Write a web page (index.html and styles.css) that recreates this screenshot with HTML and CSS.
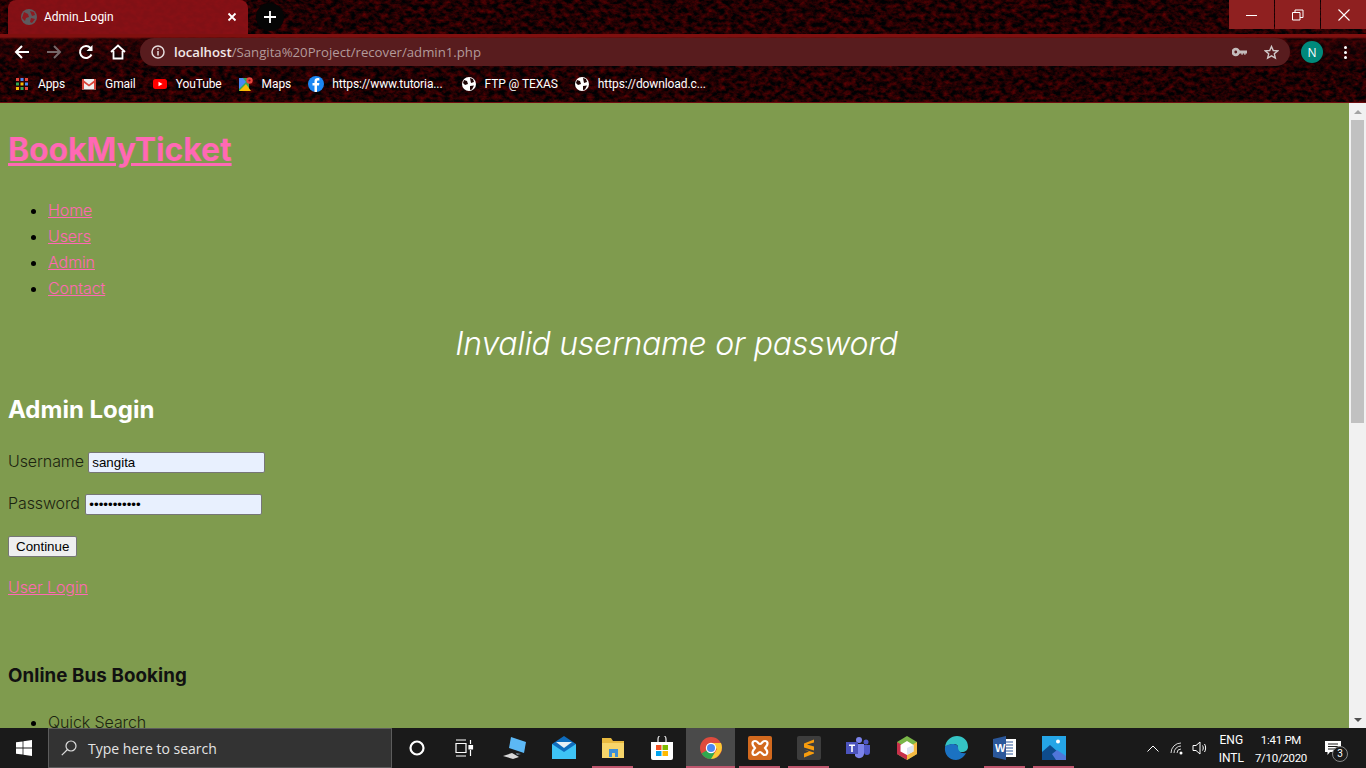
FILE: index.html
```html
<!DOCTYPE html>
<html lang="en">

<head>
    <meta charset="UTF-8">
    <title>Admin_Login</title>
    <link rel="stylesheet" href="styles.css">
</head>

<body>
    <div class="chrome">
        <svg class="texture" width="100%" height="100%" aria-hidden="true">
            <filter id="grain" x="0" y="0" width="100%" height="100%" color-interpolation-filters="sRGB">
                <feTurbulence type="fractalNoise" baseFrequency="0.16 0.22" numOctaves="4" seed="7" />
                <feColorMatrix type="matrix" values="0.65 0 0 0 -0.2  0 0 0 0 0.005  0 0 0 0 0.01  0 0 0 0 1" />
            </filter>
            <rect width="100%" height="100%" filter="url(#grain)" />
        </svg>

        <div class="tabstrip">
            <div class="tab">
                <svg class="favicon" viewBox="0 0 16 16"><circle cx="8" cy="8" r="8" fill="#5e5a5e"/><path d="M3 3l4 2 1 3-3 1-1 3-3-3zM9 2l4 1 1 3-3 1zM10 9l4 1-3 4-2-1z" fill="#8e1a20"/></svg>
                <span class="tab-title">Admin_Login</span>
                <svg class="tab-close" viewBox="0 0 10 10"><path d="M1.500 1.500l7 7M8.500 1.500l-7 7" stroke="#fff" stroke-width="1.800"/></svg>
            </div>
            <div class="new-tab"><svg viewBox="0 0 14 14" width="14" height="14"><path d="M7 1v12M1 7h12" stroke="#fff" stroke-width="1.800"/></svg></div>
            <div class="win-controls">
                <div class="win-btn"><svg viewBox="0 0 12 12" width="12" height="12"><path d="M0 6.500h11" stroke="#fff"/></svg></div>
                <div class="win-btn"><svg viewBox="0 0 12 12" width="12" height="12" fill="none" stroke="#fff"><path d="M.5 3.500h7.500v7.500H.5zM3 3.500V1h8v7.500H8"/></svg></div>
                <div class="win-btn"><svg viewBox="0 0 12 12" width="12" height="12"><path d="M.5.500l11 11M11.500.500l-11 11" stroke="#fff" stroke-width="1.100"/></svg></div>
            </div>
        </div>

        <div class="toolbar">
            <svg class="nav-icon" viewBox="0 0 16 16"><path d="M15 8H2M8 2L2 8l6 6" fill="none" stroke="#fff" stroke-width="2"/></svg>
            <svg class="nav-icon" viewBox="0 0 16 16"><path d="M1 8h13M8 2l6 6-6 6" fill="none" stroke="#77686a" stroke-width="2"/></svg>
            <svg class="nav-icon" viewBox="0 0 16 16"><path d="M13.500 10.500A6 6 0 1 1 12.500 4" fill="none" stroke="#fff" stroke-width="2"/><path d="M14.500 1v6h-6z" fill="#fff"/></svg>
            <svg class="nav-icon" viewBox="0 0 16 16"><path d="M1 8l7-6.500L15 8M3.500 7v7.500h9V7" fill="none" stroke="#fff" stroke-width="1.800"/></svg>
            <div class="omnibox">
                <svg class="info-icon" viewBox="0 0 14 14"><circle cx="7" cy="7" r="6" fill="none" stroke="#e6dcdc" stroke-width="1.500"/><path d="M7 6v4.500M7 3.300v1.500" stroke="#e6dcdc" stroke-width="1.500"/></svg>
                <span class="url"><b>localhost</b>/Sangita%20Project/recover/admin1.php</span>
                <svg class="omni-key" viewBox="0 0 16 10"><circle cx="4" cy="5" r="3" fill="none" stroke="#c4bcbc" stroke-width="3"/><path d="M7 3.500h9v3h-1.500V8H13V6.500h-1.500V8H10V6.500H7z" fill="#c4bcbc"/></svg>
                <svg class="omni-star" viewBox="0 0 16 16"><path d="M8 1.600l1.900 4.300 4.700.4-3.600 3.100 1.100 4.600L8 11.600 3.900 14l1.100-4.600L1.400 6.300l4.700-.4z" fill="none" stroke="#d0c8c8" stroke-width="1.500"/></svg>
            </div>
            <div class="avatar">N</div>
            <div class="kebab"><i></i><i></i><i></i></div>
        </div>

        <div class="bookmarks">
            <div class="bookmark">
                <svg class="bm-icon" viewBox="0 0 14 14"><path d="M1 1h3v3H1z" fill="#e8453c"/><path d="M5.500 1h3v3h-3z" fill="#4a8af4"/><path d="M10 1h3v3h-3z" fill="#e8453c"/><path d="M1 5.500h3v3H1z" fill="#34a853"/><path d="M5.500 5.500h3v3h-3z" fill="#f9bb05"/><path d="M10 5.500h3v3h-3z" fill="#4a8af4"/><path d="M1 10h3v3H1z" fill="#f9bb05"/><path d="M5.500 10h3v3h-3z" fill="#34a853"/><path d="M10 10h3v3h-3z" fill="#e8453c"/></svg>
                Apps
            </div>
            <div class="bookmark">
                <svg class="bm-icon" viewBox="0 0 14 14"><path d="M0 2h14v10.500H0z" fill="#eee"/><path d="M0 2l7 5.500L14 2v2.500L7 9.500 0 4.500z" fill="#d8453a"/><path d="M0 2h2v10.500H0zM12 2h2v10.500h-2z" fill="#d8453a"/></svg>
                Gmail
            </div>
            <div class="bookmark">
                <svg class="bm-icon" viewBox="0 0 14 14"><rect y="2" width="14" height="10" rx="2.500" fill="#f00"/><path d="M5.500 4.700L9.500 7l-4 2.300z" fill="#fff"/></svg>
                YouTube
            </div>
            <div class="bookmark">
                <svg class="bm-icon" viewBox="0 0 14 14"><path d="M0 1h10v13H0z" fill="#35a853"/><path d="M0 14l7-7 5 7z" fill="#f9bb05"/><path d="M0 1h4l3 4-7 7z" fill="#4a8af4"/><circle cx="10.500" cy="3.500" r="3.200" fill="#e8453c"/><circle cx="10.500" cy="3.500" r="1.100" fill="#7d1510"/></svg>
                Maps
            </div>
            <div class="bookmark bookmark-fb">
                <svg class="bm-icon bm-icon-fb" viewBox="0 0 16 16"><circle cx="8" cy="8" r="8" fill="#1b87f3"/><path d="M9 16V9.500h2l.4-2.500H9V5.600c0-.8.400-1.200 1.200-1.200h1.200V2.200C11 2.100 10.300 2 9.700 2 7.800 2 6.500 3.100 6.500 5.200V7H4.500v2.500h2V16z" fill="#fff"/></svg>
                https://www.tutoria...
            </div>
            <div class="bookmark">
                <svg class="bm-icon" viewBox="0 0 14 14"><circle cx="7" cy="7" r="7" fill="#fff"/><path d="M2 3l3 1 1 3-3 1-2-2zM8 1l3 1 1 3-3 1zM8 9l4-.5-2 4-2 .5z" fill="#1c0405"/></svg>
                FTP @ TEXAS
            </div>
            <div class="bookmark">
                <svg class="bm-icon" viewBox="0 0 14 14"><circle cx="7" cy="7" r="7" fill="#fff"/><path d="M2 3l3 1 1 3-3 1-2-2zM8 1l3 1 1 3-3 1zM8 9l4-.5-2 4-2 .5z" fill="#1c0405"/></svg>
                https://download.c...
            </div>
        </div>
    </div>

    <div class="viewport">
        <main class="page">
            <h1 class="site-title"><a href="#">BookMyTicket</a></h1>
            <ul class="site-nav">
                <li><a href="#">Home</a></li>
                <li><a href="#">Users</a></li>
                <li><a href="#">Admin</a></li>
                <li><a href="#">Contact</a></li>
            </ul>
            <p class="error-msg">Invalid username or password</p>
            <h2 class="login-title">Admin Login</h2>
            <form class="login-form">
                <p>Username <input type="text" value="sangita"></p>
                <p>Password <input type="password" value="sangita1234"></p>
                <p><button type="button">Continue</button></p>
                <p><a href="#">User Login</a></p>
            </form>
            <h3 class="footer-title">Online Bus Booking</h3>
            <ul class="footer-list">
                <li>Quick Search</li>
            </ul>
        </main>
        <div class="scrollbar">
            <div class="scroll-arrow scroll-up"></div>
            <div class="scroll-track"><div class="scroll-thumb"></div></div>
            <div class="scroll-arrow scroll-down"></div>
        </div>
    </div>

    <footer class="taskbar">
        <div class="start"><svg viewBox="0 0 16 16" width="16" height="16"><path d="M0 2.300l6.600-.9v6.200H0zM7.400 1.300L16 0v7.600H7.400zM0 8.400h6.600v6.200L0 13.700zM7.400 8.400H16V16l-8.600-1.300z" fill="#fff"/></svg></div>
        <div class="searchbox">
            <svg viewBox="0 0 16 16" width="16" height="16"><circle cx="10" cy="6" r="5" fill="none" stroke="#ddd" stroke-width="1.200"/><path d="M6.500 9.500L.8 15.200" stroke="#ddd" stroke-width="1.200"/></svg>
            <span>Type here to search</span>
        </div>
        <div class="task-icons">
            <div class="task"><svg viewBox="0 0 24 24"><circle cx="12" cy="12" r="6.500" fill="none" stroke="#fff" stroke-width="2.200"/></svg></div>
            <div class="task task-view"><svg viewBox="0 0 24 24" fill="none" stroke="#fff" stroke-width="1.200"><path d="M4 4h10M4 20h10M4 7.500h10v9H4zM18.500 4v4M18.500 14v6"/><path d="M17 9.500h3.500V13H17z" fill="#fff"/></svg></div>
            <div class="task"><svg viewBox="0 0 24 24"><path d="M8 1l15 5-2 11L6 12z" fill="#5cb8f5"/><path d="M11 13l2 4 5 1-4 1z" fill="#7a8d9a"/><path d="M0 20l9-3 7 4-6 2z" fill="#d8d8d8"/></svg></div>
            <div class="task"><svg viewBox="0 0 24 24"><path d="M0 8l12-8 12 8v15H0z" fill="#0f6cbd"/><path d="M0 8l12 8 12-8v15H0z" fill="#3ec3f5"/><path d="M4 6h16l-8 6z" fill="#e8eef4"/></svg></div>
            <div class="task running"><svg viewBox="0 0 24 24"><path d="M1 2h9l2 3h11v17H1z" fill="#e8b93f"/><path d="M1 7h22v15H1z" fill="#f6d56a"/><path d="M8 13h9v8h-3v-4h-3v4H8z" fill="#3c8fd6"/></svg></div>
            <div class="task"><svg viewBox="0 0 24 24"><path d="M1 6h22v16a2 2 0 0 1-2 2H3a2 2 0 0 1-2-2z" fill="#fff"/><path d="M8 6V3a4 4 0 0 1 8 0v3" fill="none" stroke="#ddd" stroke-width="1.300"/><path d="M6 9h5.500v5H6z" fill="#f25022"/><path d="M12.500 9H18v5h-5.500z" fill="#7fba00"/><path d="M6 15h5.500v5H6z" fill="#00a4ef"/><path d="M12.500 15H18v5h-5.500z" fill="#ffb900"/></svg></div>
            <div class="task running active"><svg viewBox="0 0 24 24"><circle cx="12" cy="12" r="11" fill="#dd4b3e"/><path d="M12 12L2.500 17.500A11 11 0 0 0 12 23a11 11 0 0 0 6-2z" fill="#2fa84f"/><path d="M12 7h10a11 11 0 0 1-1 10.500 11 11 0 0 1-9 5.500l6-10z" fill="#fcc934"/><circle cx="12" cy="12" r="5.200" fill="#fff"/><circle cx="12" cy="12" r="4" fill="#4a89f3"/></svg></div>
            <div class="task running"><svg viewBox="0 0 24 24"><rect width="24" height="24" rx="2" fill="#d2691e"/><path d="M7 5c3 0 3 3 5 3s2-3 5-3 3 3 1.500 5L17 12l1.500 2c1.500 2 .5 5-1.500 5-3 0-3-3-5-3s-2 3-5 3-3-3-1.500-5L7 12l-1.500-2C4 8 4 5 7 5z" fill="none" stroke="#fff" stroke-width="2.200"/></svg></div>
            <div class="task running"><svg viewBox="0 0 24 24"><rect width="24" height="24" rx="2" fill="#3d3d3d"/><path d="M17 5L7 9v4l10 3v-4L10 10l7-2zM7 15l10 3v1L7 23v-4l5-2z" fill="#f79c0d" transform="translate(0 -1.500)"/></svg></div>
            <div class="task"><svg viewBox="0 0 24 24"><circle cx="13" cy="4" r="3" fill="#7b83eb"/><circle cx="20" cy="6" r="2.500" fill="#5059c9"/><path d="M9 8h9v10a5 5 0 0 1-9 2z" fill="#7b83eb"/><path d="M18 9h6v7a3 3 0 0 1-6 0z" fill="#5059c9"/><path d="M0 6h12v12H0z" fill="#4b53bc"/><path d="M3 8.500h6v1.500H6.800v6H5.200v-6H3z" fill="#fff"/></svg></div>
            <div class="task"><svg viewBox="0 0 24 24"><path d="M12 0l10 6v12l-10 6L2 18V6z" fill="#7ab648"/><path d="M2 6l10 6v12L2 18z" fill="#c8304a"/><path d="M22 6L12 12v12l10-6z" fill="#f4b942"/><path d="M12 5l6.500 4v6.500L12 19l-6.500-3.500V9z" fill="#fff"/><path d="M12 12l6.500-3v6.500L12 19z" fill="#dce4f0"/></svg></div>
            <div class="task"><svg viewBox="0 0 24 24"><path d="M1 11C2 4 7 0 13 0c6 0 11 4 11 11 0 3-3 5-6 5-4 0-5-2-4-5 0-2-2-3-4-3-4 0-8 2-9 3z" fill="#35c4c4"/><path d="M1 11c1-2 5-3 8-3 2 0 5 1 5 3 0 4 3 7 8 6-2 4-6 7-10 7C5 24 0 18 1 11z" fill="#1b72c2"/></svg></div>
            <div class="task running"><svg viewBox="0 0 24 24"><path d="M9 3h14v18H9z" fill="#fff"/><path d="M13 6h7M13 9h7M13 12h7M13 15h7M13 18h7" stroke="#2b579a" stroke-width="1.200"/><path d="M0 3L13 0v24L0 21z" fill="#2b579a"/><text x="2" y="16" class="word-w">W</text></svg></div>
            <div class="task running"><svg viewBox="0 0 24 24"><path d="M0 0h24v24H0z" fill="#25a5e6"/><path d="M0 24v-8l8-7 8 7 8 8z" fill="#0e4c8c"/><path d="M14 24l-4-6 5-4 9 6v4z" fill="#4f76d9"/><circle cx="16" cy="5.500" r="2" fill="#fff"/></svg></div>
        </div>
        <div class="tray">
            <svg class="tray-chevron" viewBox="0 0 12 7" width="12" height="7"><path d="M.5 6.500L6 1l5.500 5.500" fill="none" stroke="#fff"/></svg>
            <svg viewBox="0 0 16 14" width="16" height="14" fill="none" stroke="#d8d8d8"><path d="M1 12A10 10 0 0 1 11 2M4 12a7 7 0 0 1 7-7M7 12a4 4 0 0 1 4-4"/><circle cx="11" cy="12" r="1.500" fill="#fff" stroke="none"/></svg>
            <svg viewBox="0 0 16 14" width="16" height="14" fill="none" stroke="#fff"><path d="M1 4.500h3L8 1v12L4 9.500H1zM10.500 4.500c1 1.500 1 3.500 0 5M12.500 3c1.500 2 1.500 6 0 8"/></svg>
            <div class="tray-lang"><span>ENG</span><span>INTL</span></div>
            <div class="tray-clock"><span>1:41 PM</span><span>7/10/2020</span></div>
            <div class="notif">
                <svg viewBox="0 0 16 14" width="16" height="14"><path d="M0 0h16v11H5l-2.500 3v-3H0z" fill="#fff"/><path d="M3 3h10M3 5.500h10M3 8h7" stroke="#1a1a1a"/></svg>
                <span class="notif-count">3</span>
            </div>
        </div>
    </footer>
</body>

</html>
```

FILE: styles.css
```css
* {
    box-sizing: border-box;
}

html,
body {
    height: 100%;
}

body {
    margin: 0;
    display: flex;
    flex-direction: column;
    overflow: hidden;
    font-family: "Open Sans", "Noto Sans", sans-serif;
    background: #1a1a1a;
}

/* browser header */
.chrome {
    position: relative;
    height: 103px;
    flex: none;
    background: #170204;
    border-bottom: 1px solid #6d0d10;
    overflow: hidden;
}

.texture {
    position: absolute;
    top: 0;
    left: 0;
}

.tabstrip,
.toolbar,
.bookmarks {
    position: relative;
}

.tabstrip {
    height: 34px;
    display: flex;
    align-items: flex-start;
    padding-left: 8px;
}

.tab {
    width: 240px;
    height: 34px;
    display: flex;
    align-items: center;
    padding: 0 11px 0 13px;
    border-radius: 8px 8px 0 0;
    background: rgba(146, 18, 24, 0.88);
    color: #fff;
    font-family: Roboto, sans-serif;
    font-size: 12px;
}

.favicon {
    width: 16px;
    height: 16px;
    margin-right: 7px;
}

.tab-title {
    flex: 1;
}

.tab-close {
    width: 10px;
    height: 10px;
}

.new-tab {
    width: 28px;
    height: 28px;
    margin: 3px 0 0 8px;
    border-radius: 50%;
    background: #050505;
    display: flex;
    align-items: center;
    justify-content: center;
}

.win-controls {
    margin-left: auto;
    display: flex;
    gap: 1px;
}

.win-btn {
    width: 45px;
    height: 29px;
    background: #8f2020;
    display: flex;
    align-items: center;
    justify-content: center;
}

.toolbar {
    height: 36px;
    display: flex;
    align-items: center;
    padding-left: 14px;
    background: linear-gradient(#80100f 0, #80100f 3px, rgba(70, 6, 8, 0.3) 5px, rgba(0, 0, 0, 0.1) 100%);
}

.nav-icon {
    width: 16px;
    height: 16px;
    margin-right: 16px;
}

.omnibox {
    width: 1150px;
    height: 28px;
    margin-left: -2px;
    display: flex;
    align-items: center;
    padding: 0 11px;
    border-radius: 14px;
    background: #581c1e;
    font-size: 13.200px;
}

.info-icon {
    width: 14px;
    height: 14px;
    margin-right: 9px;
}

.url {
    flex: 1;
    color: #b39a9a;
}

.url b {
    color: #f2e8e8;
    font-weight: 600;
}

.omni-key {
    width: 15px;
    height: 10px;
    margin-right: 17px;
}

.omni-star {
    width: 15px;
    height: 15px;
}

.avatar {
    width: 22px;
    height: 22px;
    margin-left: 11px;
    border-radius: 50%;
    background: #00897b;
    color: #fff;
    font-size: 12px;
    display: flex;
    align-items: center;
    justify-content: center;
}

.kebab {
    margin-left: 21px;
    display: flex;
    flex-direction: column;
    gap: 2px;
}

.kebab i {
    width: 3px;
    height: 3px;
    background: #fff;
    border-radius: 50%;
}

.bookmarks {
    height: 32px;
    display: flex;
    align-items: center;
    padding: 0 0 4px 7px;
    gap: 1px;
    color: #fff;
    font-family: Roboto, sans-serif;
    font-size: 12px;
    letter-spacing: -0.1px;
}

.bookmark {
    display: flex;
    align-items: center;
    gap: 9px;
    padding: 0 8px;
    white-space: nowrap;
}

.bookmark-fb {
    margin-right: 2px;
    gap: 8px;
}

.bm-icon {
    width: 14px;
    height: 14px;
}

.bm-icon-fb {
    width: 16px;
    height: 16px;
}

/* page */
.viewport {
    flex: 1;
    min-height: 0;
    display: flex;
    background: #7f9b4e;
}

.page {
    flex: 1;
    min-width: 0;
    overflow: hidden;
    padding: 0 8px;
    font-family: Inter, "Noto Sans", sans-serif;
    font-size: 16px;
    font-weight: 300;
    letter-spacing: -0.1px;
    color: #1c2410;
}

.page a {
    color: #ff69b4;
    font-weight: 350;
}

.site-title {
    margin: 22px 0 0;
    font-size: 32px;
    font-weight: 700;
    line-height: 50px;
}

.page .site-title a {
    font-weight: 700;
}

.site-nav {
    margin: 22px 0 0;
    padding-left: 40px;
}

.site-nav li,
.footer-list li {
    line-height: 26px;
}

.site-nav li::marker,
.footer-list li::marker {
    color: #000;
}

.error-msg {
    margin: 20px 0 0;
    padding-left: 4px;
    text-align: center;
    font-size: 32px;
    font-style: italic;
    line-height: 46px;
    letter-spacing: -0.3px;
    color: #fff;
}

.login-title {
    margin: 25px 0 0;
    font-size: 24px;
    font-weight: 700;
    line-height: 36px;
    letter-spacing: 0;
    color: #fff;
}

.login-form {
    margin-top: 20px;
}

.login-form p {
    margin: 0 0 16px;
    line-height: 26px;
}

.login-form input {
    width: 177px;
    height: 21px;
    padding: 1px 3px;
    border: 1px solid #767676;
    border-radius: 2px;
    background: #e8f0fe;
    font-family: "Liberation Sans", sans-serif;
    font-size: 13.333px;
}

.login-form input[type="password"] {
    margin-left: 1px;
}

.login-form button {
    height: 21px;
    padding: 1px 7px;
    border: 1px solid #767676;
    border-radius: 2px;
    background: #efefef;
    font-family: "Liberation Sans", sans-serif;
    font-size: 13.333px;
}

.footer-title {
    margin: 62px 0 0;
    font-size: 18.720px;
    font-weight: 700;
    line-height: 28px;
    letter-spacing: 0.1px;
    color: #111;
}

.footer-list {
    margin: 19px 0 0;
    padding-left: 40px;
}

.scrollbar {
    width: 17px;
    flex: none;
    display: flex;
    flex-direction: column;
    background: #f1f1f1;
}

.scroll-arrow {
    height: 17px;
    flex: none;
    display: flex;
    align-items: center;
    justify-content: center;
}

.scroll-arrow::before {
    content: "";
    border-left: 4px solid transparent;
    border-right: 4px solid transparent;
}

.scroll-up::before {
    border-bottom: 4px solid #a3a3a3;
}

.scroll-down::before {
    border-top: 4px solid #505050;
}

.scroll-track {
    flex: 1;
    padding: 0 2px;
}

.scroll-thumb {
    height: 303px;
    background: #c1c1c1;
}

/* windows taskbar */
.taskbar {
    height: 40px;
    flex: none;
    display: flex;
    background: #1a1a1a;
    color: #fff;
}

.start {
    width: 48px;
    display: flex;
    align-items: center;
    justify-content: center;
}

.searchbox {
    width: 344px;
    display: flex;
    align-items: center;
    gap: 11px;
    padding-left: 12px;
    background: #333;
    border: 1px solid #5c5c5c;
    color: #e4e4e4;
    font-size: 14px;
}

.task-icons {
    display: flex;
}

.task {
    position: relative;
    width: 49px;
    display: flex;
    align-items: center;
    justify-content: center;
}

.task svg {
    width: 24px;
    height: 24px;
}

.task-view {
    padding-right: 4px;
}

.task.active {
    background: #4a4a4a;
}

.task.running::after {
    content: "";
    position: absolute;
    left: 4px;
    right: 4px;
    bottom: 0;
    height: 2px;
    background: #c0566e;
}

.task.active::after {
    left: 0;
    right: 0;
}

.word-w {
    font-family: "Liberation Sans", sans-serif;
    font-size: 11px;
    font-weight: 700;
    fill: #fff;
}

.tray {
    flex: 1;
    display: flex;
    align-items: center;
    justify-content: flex-end;
    gap: 6px;
    padding-right: 25px;
    font-family: Roboto, sans-serif;
    font-size: 12px;
}

.tray-chevron {
    margin-right: 5px;
}

.tray-lang,
.tray-clock {
    display: flex;
    flex-direction: column;
    align-items: center;
    margin-top: 2px;
    line-height: 18px;
}

.tray-lang {
    margin-left: 5px;
    margin-right: 5px;
}

.tray-clock {
    margin-right: 12px;
    font-size: 11.500px;
    letter-spacing: -0.3px;
}

.notif {
    position: relative;
    width: 16px;
    height: 14px;
    display: flex;
}

.notif-count {
    position: absolute;
    left: 7px;
    top: 5px;
    width: 16px;
    height: 16px;
    border: 1px solid #888;
    border-radius: 50%;
    background: #1a1a1a;
    font-size: 10px;
    line-height: 14px;
    text-align: center;
}
```
